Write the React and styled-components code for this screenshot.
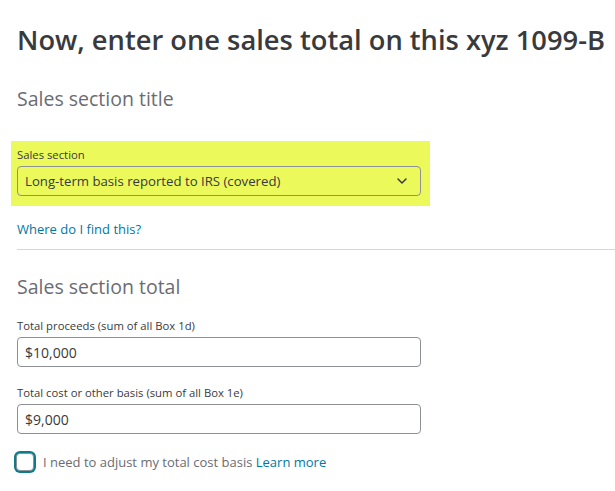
import React from 'react';
import styled, { createGlobalStyle } from 'styled-components';

const Global = createGlobalStyle`
  body {
    margin: 0;
    background: #fff;
    font-family: "Open Sans", Lato, sans-serif;
    color: #393a3d;
  }
`;

const Page = styled.div`
  padding: 22px 0 0 17px;
  width: 598px;
`;

const Title = styled.h1`
  margin: 0;
  font-size: 27.3px;
  line-height: 36px;
  font-weight: 600;
  color: #393a3d;
  white-space: nowrap;
`;

const SectionTitle = styled.h2`
  margin: ${p => p.$top}px 0 0;
  font-size: 19.5px;
  line-height: 26px;
  font-weight: 400;
  color: #6b6c72;
`;

const Highlight = styled.div`
  margin: 29px 0 0 -6px;
  width: 419px;
  box-sizing: border-box;
  padding: 7px 9px 10px 6px;
  background: #ebf95a;
`;

const Label = styled.div`
  font-size: 11.3px;
  line-height: 14px;
  color: #393a3d;
  margin-bottom: 4px;
`;

const Field = styled.div`
  margin-top: ${p => p.$top || 0}px;
  width: 404px;
`;

const Box = styled.div`
  height: 30px;
  box-sizing: border-box;
  border: 1px solid #8d9096;
  border-radius: 4px;
  display: flex;
  align-items: center;
  justify-content: space-between;
  padding: 0 12px 0 7px;
  font-size: ${p => p.$size || 14}px;
  color: #393a3d;
  background: ${p => p.$bg || '#fff'};
`;

const Link = styled.a`
  color: #0077a3;
  text-decoration: none;
  font-size: 13px;
`;

const HelpRow = styled.div`
  margin-top: 12px;
  line-height: 20px;
`;

const Divider = styled.hr`
  margin: 10px 0 0;
  border: 0;
  border-top: 1px solid #d4d7dc;
  width: 598px;
`;

const CheckRow = styled.label`
  margin-top: 17px;
  margin-left: -3px;
  display: flex;
  align-items: center;
  gap: 7px;
  font-size: 13px;
  color: #6b6c72;
`;

const Check = styled.span`
  width: 18px;
  height: 18px;
  box-sizing: border-box;
  border: 1px solid #8d9096;
  border-radius: 4px;
  box-shadow: 0 0 0 2px #0d7b8a;
  margin: 2px;
  background: #fff;
`;

const Chevron = () => (
  <svg width="12" height="8" viewBox="0 0 12 8">
    <path d="M2 2l4 4 4-4" fill="none" stroke="#393a3d" strokeWidth="1.5" strokeLinecap="round" strokeLinejoin="round" />
  </svg>
);

export default function App() {
  return (
    <Page>
      <Global />
      <Title>Now, enter one sales total on this xyz 1099-B</Title>
      <SectionTitle $top={28}>Sales section title</SectionTitle>
      <Highlight>
        <Label>Sales section</Label>
        <Box $bg="transparent" $size={13.2}>
          <span>Long-term basis reported to IRS (covered)</span>
          <Chevron />
        </Box>
      </Highlight>
      <HelpRow>
        <Link href="#">Where do I find this?</Link>
      </HelpRow>
      <Divider />
      <SectionTitle $top={24}>Sales section total</SectionTitle>
      <Field $top={19}>
        <Label>Total proceeds (sum of all Box 1d)</Label>
        <Box>$10,000</Box>
      </Field>
      <Field $top={19}>
        <Label>Total cost or other basis (sum of all Box 1e)</Label>
        <Box>$9,000</Box>
      </Field>
      <CheckRow>
        <Check />
        <span>I need to adjust my total cost basis <Link href="#">Learn more</Link></span>
      </CheckRow>
    </Page>
  );
}
